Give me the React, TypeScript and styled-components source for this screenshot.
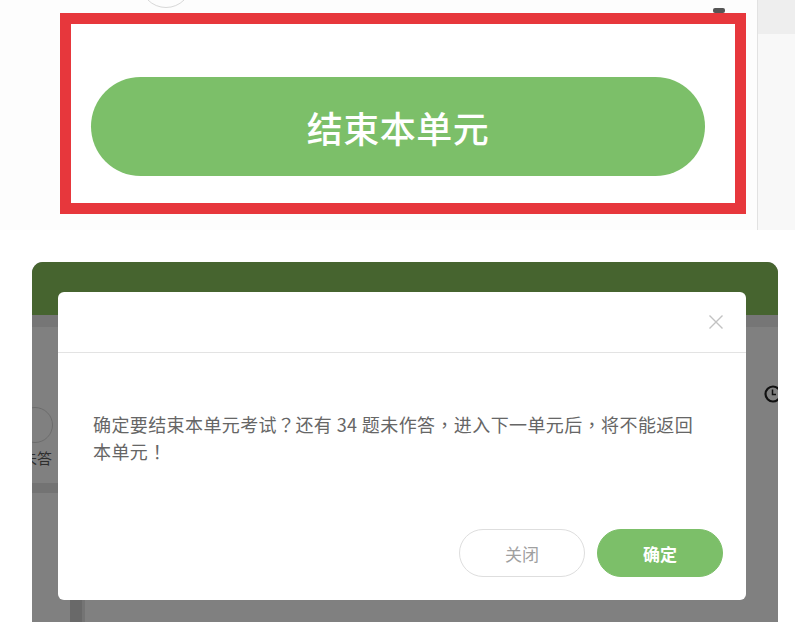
import React from "react";
import styled, { createGlobalStyle } from "styled-components";

const Global = createGlobalStyle`
  html, body { margin: 0; padding: 0; background: #ffffff; overflow: hidden; }
  body { font-family: "Noto Sans CJK SC", "Noto Sans", sans-serif; width: 795px; height: 622px; }
  * { box-sizing: border-box; }
`;

const Page = styled.div`
  width: 795px;
  height: 622px;
  display: flex;
  flex-direction: column;
  overflow: hidden;
`;

/* ---------- top snippet ---------- */
const Snippet = styled.div`
  position: relative;
  height: 230px;
  flex: none;
  display: flex;
  background: #fdfdfd;
`;

const CroppedCircle = styled.div`
  position: absolute;
  left: 140px;
  top: -44px;
  width: 52px;
  height: 52px;
  border-radius: 50%;
  border: 1px solid #d8d8d8;
`;

const MarkerBox = styled.div`
  margin: 13px 0 0 60px;
  width: 686px;
  height: 201px;
  border: 11px solid #e7373c;
  background: #ffffff;
  padding: 53px 30px 0 20px;
`;

const BigButton = styled.div`
  width: 614px;
  height: 99px;
  border-radius: 50px;
  background: #7cbf69;
  color: #ffffff;
  font-size: 36px;
  font-weight: 500;
  display: flex;
  align-items: center;
  justify-content: center;
  letter-spacing: 0.5px;
`;

const SideEdge = styled.div`
  position: relative;
  margin-left: 11px;
  flex: 1;
  border-left: 1px solid #e2e2e2;
  background: linear-gradient(#eeeeee 0 34px, #f8f8f8 34px);
`;

const TinyMark = styled.div`
  position: absolute;
  left: -45px;
  top: 8px;
  width: 12px;
  height: 5px;
  border-radius: 2px;
  background: #555;
`;

const Spacer = styled.div`
  height: 32px;
  flex: none;
`;

/* ---------- bottom: app under overlay ---------- */
const Panel = styled.div`
  position: relative;
  margin-left: 32px;
  width: 746px;
  height: 360px;
  flex: none;
  border-radius: 11px 11px 0 0;
  overflow: hidden;
  background: #808080;
  display: flex;
  flex-direction: column;
`;

const PanelHeader = styled.div`
  height: 53px;
  background: #46642f;
  flex: none;
`;

const SubBar = styled.div`
  height: 12px;
  background: #767676;
  flex: none;
`;

const PanelBody = styled.div`
  flex: 1;
  display: flex;
  align-items: stretch;
`;

const Sidebar = styled.div`
  width: 26px;
  flex: none;
  display: flex;
  flex-direction: column;
  align-items: flex-end;
  padding-top: 80px;
`;

const OptionCircle = styled.div`
  width: 36px;
  height: 36px;
  border-radius: 50%;
  border: 1.5px solid #6c6c6c;
  margin-right: 5px;
  flex: none;
`;

const OptionLabel = styled.div`
  margin-top: 6px;
  margin-right: 6px;
  font-size: 15px;
  line-height: 18px;
  color: #2e2e2e;
  white-space: nowrap;
`;

const DarkBand = styled.div`
  margin-top: 16px;
  width: 26px;
  height: 10px;
  background: #737373;
`;

const Strip = styled.div`
  margin-left: 12px;
  width: 15px;
  background: #696969;
  border-right: 3px solid #747474;
  flex: none;
`;

const ClockSlot = styled.div`
  margin-left: auto;
  margin-right: -5px;
  padding-top: 57px;
`;

/* ---------- dialog ---------- */
const Dialog = styled.div`
  position: absolute;
  left: 26px;
  top: 30px;
  width: 688px;
  height: 308px;
  background: #ffffff;
  border-radius: 6px;
  display: flex;
  flex-direction: column;
`;

const DialogHeader = styled.div`
  height: 61px;
  border-bottom: 1px solid #e3e3e3;
  display: flex;
  align-items: center;
  justify-content: flex-end;
  padding-right: 22px;
  flex: none;
`;

const DialogBody = styled.div`
  flex: 1;
  padding: 58px 40px 0 35px;
  font-size: 18px;
  line-height: 27px;
  color: #666666;
  letter-spacing: 0.4px;
`;

const Punct = styled.span`
  font-family: "Noto Sans CJK TC", "Noto Sans CJK SC", sans-serif;
`;

const DialogFooter = styled.div`
  display: flex;
  justify-content: flex-end;
  gap: 12px;
  padding: 0 23px 23px 0;
`;

const PillButton = styled.button<{ $primary?: boolean }>`
  width: 126px;
  height: 48px;
  border-radius: 24px;
  font-family: "Noto Sans CJK SC", sans-serif;
  font-size: 17px;
  font-weight: ${(p) => (p.$primary ? 700 : 400)};
  color: ${(p) => (p.$primary ? "#ffffff" : "#a0a0a0")};
  background: ${(p) => (p.$primary ? "#7cbf69" : "#ffffff")};
  border: 1px solid ${(p) => (p.$primary ? "#7cbf69" : "#dedede")};
  padding: 0;
  cursor: pointer;
`;

const CloseIcon = () => (
  <svg width="16" height="16" viewBox="0 0 16 16">
    <path d="M1.5 1.5 L14.5 14.5 M14.5 1.5 L1.5 14.5" stroke="#c2c2c2" strokeWidth="1.4" fill="none" />
  </svg>
);

const ClockIcon = () => (
  <svg width="20" height="20" viewBox="0 0 20 20">
    <circle cx="10" cy="10" r="7.5" stroke="#111" strokeWidth="2.2" fill="none" />
    <path d="M9.5 5.5 V10.5 H13" stroke="#111" strokeWidth="1.5" fill="none" />
  </svg>
);

export default function App() {
  return (
    <Page>
      <Global />
      <Snippet>
        <CroppedCircle />
        <MarkerBox>
          <BigButton>结束本单元</BigButton>
        </MarkerBox>
        <SideEdge>
          <TinyMark />
        </SideEdge>
      </Snippet>
      <Spacer />
      <Panel>
        <PanelHeader />
        <SubBar />
        <PanelBody>
          <Sidebar>
            <OptionCircle />
            <OptionLabel>未答</OptionLabel>
            <DarkBand />
          </Sidebar>
          <Strip />
          <ClockSlot>
            <ClockIcon />
          </ClockSlot>
        </PanelBody>
        <Dialog>
          <DialogHeader>
            <CloseIcon />
          </DialogHeader>
          <DialogBody>
            确定要结束本单元考试<Punct>？</Punct>还有 34 题未作答<Punct>，</Punct>进入下一单元后<Punct>，</Punct>将不能返回本单元<Punct>！</Punct>
          </DialogBody>
          <DialogFooter>
            <PillButton>关闭</PillButton>
            <PillButton $primary>确定</PillButton>
          </DialogFooter>
        </Dialog>
      </Panel>
    </Page>
  );
}
